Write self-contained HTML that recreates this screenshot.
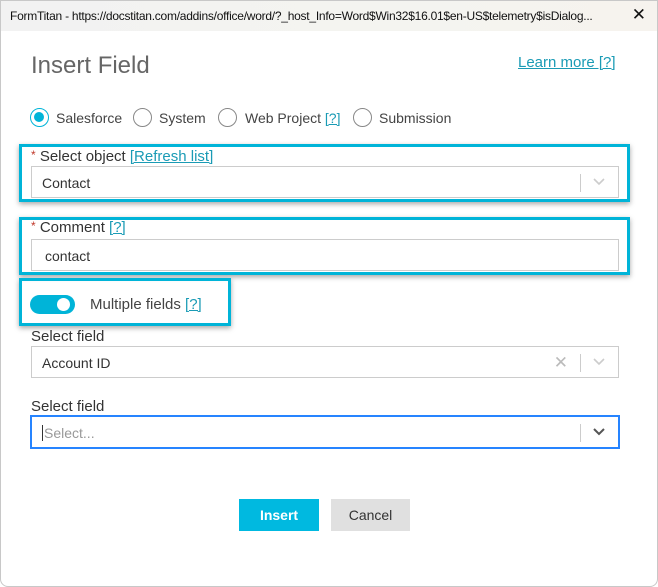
<!DOCTYPE html>
<html><head><meta charset="utf-8"><style>
*{box-sizing:border-box;margin:0;padding:0}
body{width:658px;height:587px;background:#fff;font-family:"Liberation Sans",sans-serif;color:#333;position:relative;overflow:hidden}
.frame{position:absolute;left:0;top:0;width:658px;height:587px;border:1px solid #c8c8c8;border-radius:0 0 8px 8px;z-index:5;pointer-events:none}
.tb{position:absolute;left:0;top:0;width:658px;height:31px;background:linear-gradient(90deg,#f2f2f2,#f4f4f0 60%,#f6f3ee);font-size:12px;color:#111}
.tb span{position:absolute;left:10px;top:9px;letter-spacing:-0.25px}
.tb b{position:absolute;right:12px;top:5px;font-weight:normal;font-size:17px}
.a{position:absolute}
h1{position:absolute;left:31px;top:52px;font-size:24px;font-weight:300;color:#666}
.lm{position:absolute;left:518px;top:54px;font-size:15px;color:#1a9bb5;text-decoration:underline}
.radio{position:absolute;top:108px;width:19px;height:19px;border:1.5px solid #888;border-radius:50%}
.radio.on{border-color:#00b4d8}
.radio.on::after{content:"";position:absolute;left:3px;top:3px;width:10px;height:10px;border-radius:50%;background:#00b4d8}
.rl{position:absolute;top:110px;font-size:14px;color:#444}
.hl{position:absolute;border:3px solid #00b4d8;box-shadow:0 2px 5px rgba(0,0,0,.35)}
.lbl{position:absolute;left:31px;font-size:15px;color:#333}
.lbl i{font-style:normal;color:#c0392b;font-size:12px;vertical-align:top}
.q{color:#1a9bb5}
.inp{position:absolute;left:31px;width:588px;height:32px;border:1px solid #ccc;background:#fff;font-size:14px;color:#333;padding:8px 0 0 10px}
.sep{position:absolute;right:37px;top:7px;width:1px;height:18px;background:#ccc}
.chev{position:absolute;right:12px;top:10px}
.btn{position:absolute;top:499px;height:32px;font-size:14px;text-align:center;line-height:32px}
</style></head><body>
<div class="tb"><span>FormTitan - https://docstitan.com/addins/office/word/?_host_Info=Word$Win32$16.01$en-US$telemetry$isDialog...</span><b>✕</b></div>
<h1>Insert Field</h1>
<div class="lm">Learn more [?]</div>
<div class="radio on" style="left:30px"></div><div class="rl" style="left:56px">Salesforce</div>
<div class="radio" style="left:133px"></div><div class="rl" style="left:159px">System</div>
<div class="radio" style="left:218px"></div><div class="rl" style="left:245px">Web Project <span class="q" style="text-decoration:underline">[?]</span></div>
<div class="radio" style="left:353px"></div><div class="rl" style="left:379px">Submission</div>

<div class="hl" style="left:19px;top:144px;width:611px;height:58px"></div>
<div class="lbl" style="top:148px"><i>*</i> Select object <span class="q" style="text-decoration:underline">[Refresh list]</span></div>
<div class="inp" style="top:166px">Contact<div class="sep"></div><svg class="chev" width="14" height="10" viewBox="0 0 14 10"><path d="M2 2l5 5 5-5" stroke="#ccc" stroke-width="1.6" fill="none"/></svg></div>

<div class="hl" style="left:19px;top:217px;width:611px;height:58px"></div>
<div class="lbl" style="top:219px"><i>*</i> Comment <span class="q" style="text-decoration:underline">[?]</span></div>
<div class="inp" style="top:239px;padding-left:13px">contact</div>

<div class="hl" style="left:19px;top:278px;width:212px;height:48px"></div>
<div class="a" style="left:30px;top:295px;width:45px;height:19px;border-radius:10px;background:#00b4d8"></div>
<div class="a" style="left:57px;top:298px;width:13px;height:13px;border-radius:50%;background:#fff"></div>
<div class="a" style="left:90px;top:296px;font-size:15px;color:#444">Multiple fields <span class="q" style="text-decoration:underline">[?]</span></div>

<div class="lbl" style="top:328px">Select field</div>
<div class="inp" style="top:346px">Account ID<span style="position:absolute;right:50px;top:6px;color:#bbb;font-size:17px">✕</span><div class="sep"></div><svg class="chev" width="14" height="10" viewBox="0 0 14 10"><path d="M2 2l5 5 5-5" stroke="#ccc" stroke-width="1.6" fill="none"/></svg></div>

<div class="lbl" style="top:398px">Select field</div>
<div class="inp" style="top:416px;border:1px solid #2684ff;box-shadow:0 0 0 1px #2684ff;color:#999"><span style="border-left:1px solid #333;padding-left:1px">Select...</span><div class="sep"></div><svg class="chev" width="14" height="10" viewBox="0 0 14 10"><path d="M2 2l5 5 5-5" stroke="#555" stroke-width="2" fill="none"/></svg></div>

<div class="btn" style="left:239px;width:80px;background:#00b9e0;color:#fff;font-weight:bold">Insert</div>
<div class="btn" style="left:331px;width:79px;background:#e0e0e0;color:#333">Cancel</div>
<div class="frame"></div>
</body></html>
